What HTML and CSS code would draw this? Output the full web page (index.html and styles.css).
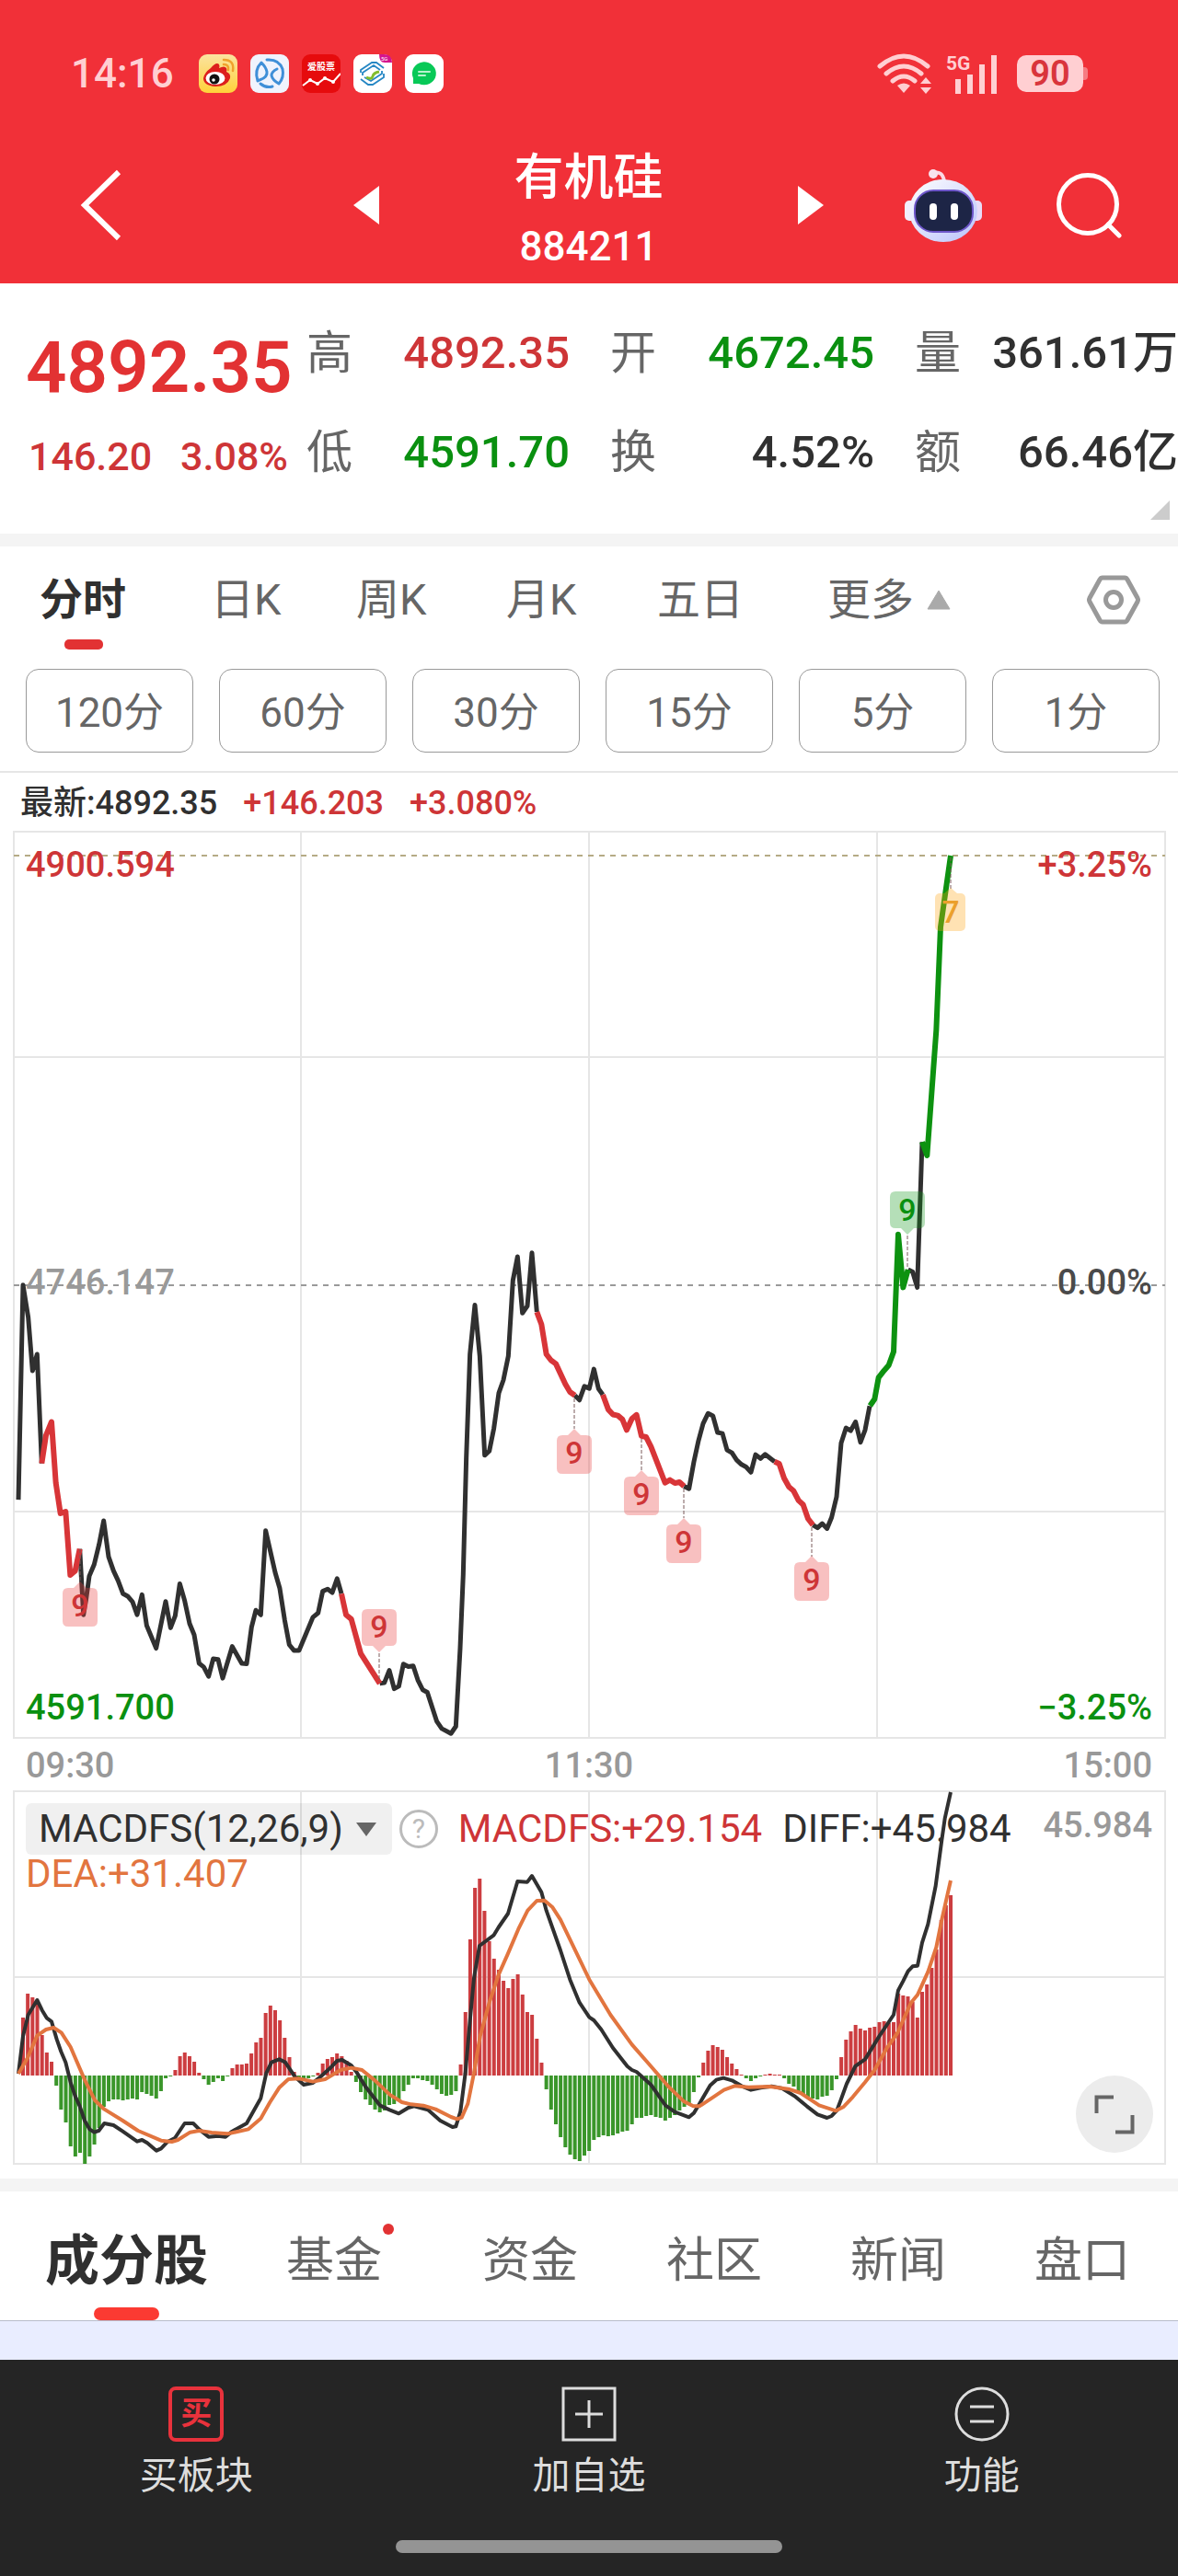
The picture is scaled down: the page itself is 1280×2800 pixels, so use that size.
FILE: index.html
```html
<!DOCTYPE html>
<html lang="zh-CN">
<head>
<meta charset="utf-8">
<meta name="viewport" content="width=device-width, initial-scale=1">
<title>有机硅 884211</title>
<link rel="stylesheet" href="styles.css">
</head>
<body>
<header class="header">
  <div class="status">
    <span class="clock">14:16</span>
    <div class="apps">
      <svg class="app" viewBox="0 0 42 42" aria-hidden="true"><defs><linearGradient id="wb" x1="0" y1="0" x2="0" y2="1"><stop offset="0" stop-color="#fbe3a0"/><stop offset="1" stop-color="#ffd23a"/></linearGradient></defs><rect width="42" height="42" rx="9" fill="url(#wb)"/><path d="M13 15q6-7 9-4q1 2 0 4q6-3 8 0q1 2 0 4q5 2 4 7q-3 9-16 9q-13-1-13-9q1-6 8-11z" fill="#dd1f1c"/><ellipse cx="18" cy="26" rx="10.500" ry="7" fill="#fff"/><circle cx="17" cy="27" r="5.500" fill="#111"/><circle cx="16" cy="28" r="1.800" fill="#fff"/><path d="M27 6q12 0 10 12M27 11q6 0 5 6" fill="none" stroke="#f0a12c" stroke-width="2.500" stroke-linecap="round"/></svg>
      <svg class="app" viewBox="0 0 42 42" aria-hidden="true"><rect width="42" height="42" rx="9" fill="#f0f3fd"/><g fill="none" stroke="#3f8fd8" stroke-width="3" stroke-linecap="round" stroke-linejoin="round"><path d="M12 9q-8 8-4 20l2-1q9-3 8-9q-1-5-6-10zM18 6q13-1 17 10q2 9-4 16q-7-4-8-9q0-4 6-7M11 32q6 5 13 3"/></g></svg>
      <svg class="app" viewBox="0 0 42 42" aria-hidden="true"><rect width="42" height="42" rx="9" fill="#e60b0d"/><text x="21" y="17" text-anchor="middle" font-size="10" font-weight="700" fill="#fff">爱股票</text><path d="M1 34l8-6 8 4 8-6 9 4 8-9" fill="none" stroke="#fff" stroke-width="2"/><g fill="#fff"><circle cx="9" cy="28" r="2"/><circle cx="17" cy="32" r="2"/><circle cx="25" cy="26" r="2"/><circle cx="34" cy="30" r="2"/></g></svg>
      <svg class="app" viewBox="0 0 42 42" aria-hidden="true"><rect width="42" height="42" rx="9" fill="#fff"/><g fill="none" stroke="#2687c4" stroke-width="1.800"><path d="M8 20v-3l12-8h5l8 6M10 23v-3l12-8 7 5M33 21v4l-12 8h-5l-8-6M31 18v3l-12 8-7-4"/></g><path d="M14 25q6 3 7-1t7-5" fill="none" stroke="#82bd2d" stroke-width="3"/><path d="M28 0h5q9 0 9 9H34q-6 0-6-9z" fill="#d5148d"/><text x="30" y="7" font-size="6" fill="#fff">5G</text></svg>
      <svg class="app" viewBox="0 0 42 42" aria-hidden="true"><rect width="42" height="42" rx="9" fill="#fff"/><path d="M9 32v-6a13 12.500 0 1 1 6 6z" fill="#08c957"/><path d="M15 19h12M15 23h7" stroke="#b8f2ce" stroke-width="2" stroke-linecap="round"/></svg>
    </div>
    <svg class="wifi" viewBox="0 0 60 44" aria-hidden="true"><g fill="none" stroke="#ffcfd2" stroke-width="5" stroke-linecap="round"><path d="M3 14Q29-8 55 14M10 22Q29 6 48 22M17 30Q29 20 41 30"/></g><path d="M22 35q7-5 14 0l-7 8z" fill="#ffcfd2"/><path d="M47 33l6-7 6 7zM47 37h12l-6 7z" fill="#ffcfd2"/></svg>
    <svg class="signal" viewBox="0 0 58 44" aria-hidden="true"><text x="1" y="18" font-size="21" font-weight="700" fill="#ffcfd2">5G</text><path d="M14 28v16M27 23v21M40 12v32M53 2v42" stroke="#ffcfd2" stroke-width="6"/></svg>
    <span class="battery">90</span>
  </div>
  <nav class="titlebar">
    <button class="icon-btn back" aria-label="返回"><svg width="46" height="80" viewBox="0 0 46 80"><path d="M42 4L5 40l37 36" fill="none" stroke="#fff" stroke-width="6"/></svg></button>
    <button class="icon-btn" aria-label="上一个"><svg width="28" height="42" viewBox="0 0 28 42"><path d="M28 0v42L0 21z" fill="#fff"/></svg></button>
    <h1 class="title">有机硅<small>884211</small></h1>
    <button class="icon-btn" aria-label="下一个"><svg width="28" height="42" viewBox="0 0 28 42"><path d="M0 0v42l28-21z" fill="#fff"/></svg></button>
    <button class="icon-btn robot" aria-label="智能助手"><svg width="84" height="80" viewBox="0 0 84 80"><defs><linearGradient id="rb" x1="0" y1="0" x2="1" y2="1"><stop offset="0" stop-color="#fff"/><stop offset="1" stop-color="#b9c2fb"/></linearGradient></defs><path d="M31 5q10-3 12 9" fill="none" stroke="#fbd9e4" stroke-width="4"/><circle cx="31" cy="6" r="5" fill="#f8e3ee"/><rect x="0" y="35" width="12" height="22" rx="5" fill="#f2eefd"/><rect x="72" y="35" width="12" height="22" rx="5" fill="#e8dcf8"/><ellipse cx="42" cy="46" rx="37" ry="34" fill="url(#rb)"/><rect x="11" y="24" width="63" height="45" rx="20" fill="#1d2546" stroke="#6d56c9" stroke-width="2"/><rect x="27" y="38" width="8" height="18" rx="4" fill="#fff"/><rect x="50" y="38" width="8" height="18" rx="4" fill="#fff"/></svg></button>
    <button class="icon-btn" aria-label="搜索"><svg width="72" height="72" viewBox="0 0 72 72"><circle cx="35" cy="35" r="31.500" fill="none" stroke="#fff" stroke-width="5"/><path d="M57 57l12 12" stroke="#fff" stroke-width="5" stroke-linecap="round"/></svg></button>
  </nav>
</header>

<main>
  <section class="quote">
    <div class="price">
      <strong class="last">4892.35</strong>
      <div class="change"><span>146.20</span><span>3.08%</span></div>
    </div>
    <dl class="stats">
      <div><dt>高</dt><dd class="up">4892.35</dd></div>
      <div><dt>开</dt><dd class="down">4672.45</dd></div>
      <div><dt>量</dt><dd>361.61万</dd></div>
      <div><dt>低</dt><dd class="down">4591.70</dd></div>
      <div><dt>换</dt><dd>4.52%</dd></div>
      <div><dt>额</dt><dd>66.46亿</dd></div>
    </dl>
    <svg class="corner" viewBox="0 0 21 21" aria-hidden="true"><path d="M21 0v21H0z" fill="#ccc"/></svg>
  </section>

  <section class="periods">
    <nav class="period-tabs">
      <button class="tab active">分时</button>
      <button class="tab">日K</button>
      <button class="tab">周K</button>
      <button class="tab">月K</button>
      <button class="tab">五日</button>
      <button class="tab more">更多<svg width="26" height="22" viewBox="0 0 26 22" aria-hidden="true"><path d="M13 1l12 20H1z" fill="#aaa" stroke="#aaa" stroke-linejoin="round"/></svg></button>
      <button class="tab settings" aria-label="设置"><svg width="58" height="54" viewBox="0 0 58 54"><path d="M17 3h24q2 0 3 2l11 20q1 2 0 4L44 49q-1 2-3 2H17q-2 0-3-2L3 29q-1-2 0-4L14 5q1-2 3-2z" fill="none" stroke="#999" stroke-width="5"/><circle cx="29" cy="27" r="8.500" fill="none" stroke="#999" stroke-width="5"/></svg></button>
    </nav>
    <div class="chips">
      <button>120分</button><button>60分</button><button>30分</button><button>15分</button><button>5分</button><button>1分</button>
    </div>
  </section>

  <section class="charts">
    <p class="latest"><span>最新:4892.35</span><span class="up">+146.203</span><span class="up">+3.080%</span></p>

    <svg class="chart" viewBox="0 893 1280 1002" role="img" aria-label="分时走势">
      <defs>
        <path id="flag-up" d="M-13 7h6L0 0l7 7h6q6 0 6 6v30q0 6-6 6h-26q-6 0-6-6v-30q0-6 6-6z"/>
        <path id="flag-down" d="M-13-47h26q6 0 6 6v28q0 6-6 6H7L0 0l-7-7h-6q-6 0-6-6v-28q0-6 6-6z"/>
      </defs>
      <g class="grid"><rect x="15" y="904" width="1251" height="985"/><path d="M327 904v985M640 904v985M953 904v985M15 1149h1251M15 1643h1251"/></g>
      <path d="M15 930H1266" class="dash" stroke="#b5ab85"/>
      <path d="M15 1397H1266" class="dash" stroke="#999"/>
      <g class="axis">
        <text x="28" y="953" class="t-up">4900.594</text>
        <text x="28" y="1407" class="t-mute">4746.147</text>
        <text x="28" y="1869" class="t-down">4591.700</text>
        <text x="1252" y="953" class="t-up" text-anchor="end">+3.25%</text>
        <text x="1252" y="1407" class="t-dark" text-anchor="end">0.00%</text>
        <text x="1252" y="1869" class="t-down" text-anchor="end">−3.25%</text>
      </g>
      <g transform="translate(0 1340) scale(.33333 .3827)" class="price-line">
        <path d="M60 758L75 148 92 240 106 392 121 345 136 655M260 898L272 1085 280 1045 291 975 307 942 323 885 338 818 354 920 370 960 385 988 401 1025 416 1032 432 1048 447 1085 463 1028 478 1115 509 1180 540 1047 556 1122 571 1088 586 997 602 1045 618 1110 633 1142 649 1223 664 1233 680 1260 695 1210 711 1212 726 1265 757 1175 788 1223 804 1224 820 1120 834 1072 850 1085 866 846 897 965 912 1010 928 1100 943 1170 958 1186 975 1186 1020 1092 1037 1080 1052 1018 1068 1012 1083 1022 1099 982 1113 1025M1238 1280L1253 1278 1269 1243 1285 1295 1300 1288 1315 1225 1331 1232 1347 1230 1362 1270 1378 1298 1393 1305 1424 1388 1440 1408 1470 1422 1486 1402 1500 1180 1510 970 1520 640 1532 345 1548 205 1564 350 1580 632 1595 620 1610 555 1626 455 1641 418 1657 350 1672 135 1687 68 1703 228 1719 208 1734 57 1750 225M1874 462L1889 475 1905 436 1921 442 1936 387 1951 443 1965 460M2230 720L2246 727 2262 650 2277 590 2292 542 2308 513 2324 520 2339 567 2355 570 2370 617 2386 625 2401 645 2417 658 2432 665 2448 680 2463 630 2479 641 2494 629 2525 650M2650 830L2665 838 2680 826 2696 840 2711 808 2727 750 2742 597 2758 554 2773 562 2789 537 2805 595 2820 560 2835 492"/>
        <path class="s-up" d="M136 655L150 575 168 537 182 710 197 797 214 792 229 972 245 960 260 898M1113 1025L1128 1085 1145 1097 1176 1195 1238 1280M1750 225L1765 260 1781 345 1796 362 1812 372 1843 430 1858 452 1874 462M1965 460L1983 502 1998 516 2014 519 2029 530 2043 560 2060 528 2075 517 2091 577 2106 580 2122 607 2168 710 2184 702 2200 711 2215 708 2230 720M2525 650L2540 656 2556 697 2572 722 2587 733 2603 760 2618 772 2634 812 2650 830"/>
      </g>
      <g transform="translate(880 880) scale(.33333 .5102)" class="price-line">
        <path d="M320 980L335 985 350 1018 366 708"/>
        <path class="s-down" d="M196 1270L211 1256 224 1210 242 1195 257 1184 273 1155 288 905 304 1018 320 980M366 708L382 737 412 470 426 250 459 98"/>
      </g>
      <path class="leader" d="M87 1684v34M624 1520v33M697 1564v34M743 1618v32M882 1660v32M412 1797v31M986 1343v36M1033 932v34"/>
      <g class="flags f-up">
        <use href="#flag-up" x="87" y="1719"/><use href="#flag-up" x="624" y="1553"/><use href="#flag-up" x="697" y="1598"/><use href="#flag-up" x="743" y="1650"/><use href="#flag-up" x="882" y="1691"/><use href="#flag-down" x="412" y="1796"/>
        <text x="87" y="1757">9</text><text x="624" y="1591">9</text><text x="697" y="1636">9</text><text x="743" y="1688">9</text><text x="882" y="1729">9</text><text x="412" y="1780">9</text>
      </g>
      <g class="flags f-down"><use href="#flag-down" x="986" y="1342"/><text x="986" y="1327">9</text></g>
      <g class="flags f-warn"><rect x="1016" y="971" width="33" height="41" rx="5"/><path d="M1026 971l7-6 7 6z"/><text x="1033" y="1003">7</text></g>
    </svg>

    <div class="times"><span>09:30</span><span>11:30</span><span>15:00</span></div>

    <div class="macd">
      <div class="legend">
        <div class="legend-row">
          <button class="picker">MACDFS(12,26,9)<svg width="22" height="15" viewBox="0 0 22 15" aria-hidden="true"><path d="M0 0h22L11 15z" fill="#666"/></svg></button>
          <button class="help" aria-label="帮助">?</button>
          <span class="up">MACDFS:+29.154</span>
          <span>DIFF:+45.984</span>
        </div>
        <span class="dea">DEA:+31.407</span>
      </div>
      <svg class="chart" viewBox="0 1940 1280 420" role="img" aria-label="MACDFS">
        <g class="grid"><rect x="15" y="1947" width="1251" height="405"/><path d="M327 1947v405M640 1947v405M953 1947v405M15 2149h1251"/></g>
        <g id="bars"></g>
        <g transform="translate(0 1920) scale(.33333)" class="macd-line">
          <path d="M60 1002L75 880 92 810 121 762 137 795 152 820 168 832 185 890 199 930 214 965 230 1030 245 1075 260 1108 276 1155 292 1183 307 1193 322 1188 340 1164 370 1170 400 1190 447 1223 463 1218 480 1228 510 1253 525 1246 545 1225 570 1212 602 1164 630 1164 649 1183 680 1208 711 1205 735 1208 757 1190 804 1164 850 1082 868 1000 885 965 910 955 930 965 960 1010 990 1038 1020 1032 1045 1012 1075 985 1099 960 1115 957 1145 975 1161 995 1192 1045 1238 1105 1270 1120 1300 1132 1331 1113 1350 1108 1395 1120 1435 1155 1475 1176 1486 1174 1501 1125 1517 1000 1532 830 1545 690 1563 585 1610 550 1625 525 1656 480 1687 375 1719 377 1734 357 1765 410 1781 470 1827 600 1858 695 1889 770 1921 818 1936 828 1960 858 1998 918 2045 978 2060 990 2075 996 2122 1038 2169 1105 2200 1127 2246 1144 2262 1130 2280 1100 2315 1040 2335 1022 2358 1016 2386 1024 2417 1042 2448 1055 2480 1048 2515 1043 2550 1050 2590 1075 2630 1108 2665 1135 2696 1146 2711 1140 2728 1122 2740 1090 2760 1035 2788 978 2820 955 2866 880 2913 810 2928 730 2944 700 2960 668 2975 652 2991 650 3006 575 3025 515 3050 390 3070 240 3080 170 3099 84"/>
          <path class="s-dea" d="M60 1002L90 950 121 878 150 858 175 852 200 868 230 915 276 1022 310 1090 340 1118 400 1155 450 1188 525 1220 560 1224 580 1218 620 1193 649 1188 690 1194 742 1198 810 1183 850 1148 880 1095 910 1048 940 1020 975 1018 1020 1028 1060 1020 1110 990 1145 983 1180 990 1223 1025 1270 1070 1310 1095 1340 1102 1380 1106 1420 1118 1470 1143 1490 1150 1505 1145 1525 1100 1545 1000 1565 880 1595 770 1625 680 1656 610 1690 530 1720 470 1750 438 1775 437 1800 458 1827 500 1921 695 1990 810 2060 907 2122 978 2180 1045 2230 1093 2260 1108 2280 1108 2320 1082 2360 1055 2395 1042 2440 1046 2510 1044 2570 1052 2610 1065 2670 1105 2725 1123 2750 1110 2780 1078 2820 1030 2851 990 2890 920 2925 870 2970 770 2991 745 3025 670 3052 590 3070 500 3099 372"/>
        </g>
        <g class="axis"><text x="1252" y="1997" class="t-mute" text-anchor="end">45.984</text></g>
      </svg>
      <button class="expand" aria-label="全屏"><svg width="44" height="44" viewBox="0 0 44 44"><path d="M2.500 21V3.500H21M41.500 23v18.500H23" fill="none" stroke="#666" stroke-width="4"/></svg></button>
    </div>
  </section>

  <nav class="info-tabs">
    <button class="tab active">成分股</button>
    <button class="tab"><span class="badge">基金</span></button>
    <button class="tab">资金</button>
    <button class="tab">社区</button>
    <button class="tab">新闻</button>
    <button class="tab">盘口</button>
  </nav>
  <div class="strip"></div>
</main>

<footer class="footer">
  <nav class="actions">
    <button><span class="buy">买</span>买板块</button>
    <button><svg width="60" height="60" viewBox="0 0 60 60" aria-hidden="true"><path d="M2 2h56v56H2zM15 30h30M30 15v30" fill="none" stroke="#ddd" stroke-width="3"/></svg>加自选</button>
    <button><svg width="60" height="60" viewBox="0 0 60 60" aria-hidden="true"><circle cx="30" cy="30" r="28" fill="none" stroke="#ddd" stroke-width="3"/><path d="M17 22h26M17 38h26" stroke="#ddd" stroke-width="3"/></svg>功能</button>
  </nav>
  <div class="home"></div>
</footer>
<script src="script.js"></script>
</body>
</html>
```
FILE: styles.css
```css
* { box-sizing: border-box; }
body {
  margin: 0;
  background: #fff;
  color: #303030;
  font-family: Roboto, "Noto Sans CJK SC", sans-serif;
}
button {
  margin: 0;
  padding: 0;
  border: 0;
  background: none;
  color: inherit;
  font: inherit;
}
svg { display: block; flex: none; }
.up { color: #ce3537; }
.down { color: #0a9010; }

/* Header */
.header { background: #f13038; color: #fff; height: 308px; }
.status {
  display: flex;
  align-items: center;
  padding: 56px 103px 0 77px;
}
.clock { font-size: 44px; font-weight: 500; line-height: 48px; color: #ffcfd2; width: 139px; }
.apps { display: flex; gap: 14px; flex: 1; }
.app { width: 42px; height: 42px; }
.wifi { width: 60px; height: 44px; margin-right: 14px; }
.signal { width: 58px; height: 44px; margin-right: 20px; }
.battery {
  position: relative;
  width: 72px;
  height: 40px;
  border-radius: 10px;
  background: #ffcfd2;
  color: #d9353c;
  font-size: 38px;
  font-weight: 600;
  line-height: 41px;
  text-align: center;
}
.battery::after {
  content: "";
  position: absolute;
  left: 72px;
  top: 13px;
  width: 5px;
  height: 14px;
  border-radius: 0 4px 4px 0;
  background: #f67c82;
}
.titlebar {
  display: grid;
  grid-template-columns: 297fr 28fr 455fr 116fr 164fr 133fr;
  align-items: center;
  padding: 56px 0 0 87px;
}
.titlebar .icon-btn { justify-self: start; margin-bottom: 22px; }
.title {
  margin: 0;
  text-align: center;
  font-size: 54px;
  font-weight: 500;
  line-height: 68px;
}
.title small { display: block; font-size: 44px; font-weight: 500; line-height: 80px; }

/* Quote */
.quote {
  position: relative;
  display: flex;
  gap: 20px;
  height: 286px;
  padding: 22px 0 0 28px;
  border-bottom: 14px solid #f4f4f4;
}
.price { width: 285px; padding-top: 24px; color: #e23233; }
.last { display: block; font-size: 78px; font-weight: 600; line-height: 92px; }
.change {
  display: flex;
  justify-content: space-between;
  padding-left: 3px;
  font-size: 43px;
  font-weight: 500;
  line-height: 100px;
  color: #ce3537;
}
.stats {
  flex: 1;
  display: grid;
  grid-template-columns: 286fr 287fr 286fr;
  column-gap: 44px;
  align-content: start;
  margin: 0;
  line-height: 108px;
}
.stats div { display: flex; justify-content: space-between; }
.stats dt { font-size: 50px; color: #666; }
.stats dd { margin: 0; font-size: 49px; font-weight: 500; white-space: nowrap; }
.corner { position: absolute; right: 9px; bottom: 15px; width: 21px; height: 21px; }

/* Period tabs */
.tab { position: relative; text-align: left; color: #666; white-space: nowrap; }
.tab.active { color: #303030; font-weight: 700; }
.tab.active::after { content: ""; position: absolute; background: #e23233; }
.periods { border-bottom: 2px solid #e6e6e6; padding-bottom: 20px; }
.period-tabs {
  display: grid;
  grid-template-columns: 186fr 158fr 163fr 164fr 185fr 282fr 58px;
  align-items: center;
  padding: 0 41px 17px 43px;
  font-size: 47px;
  line-height: 116px;
}
.period-tabs .active::after { left: 27px; top: 101px; width: 42px; height: 11px; border-radius: 5px; }
.more { display: flex; align-items: center; gap: 14px; }
.chips { display: grid; grid-template-columns: repeat(6, 1fr); gap: 28px; padding: 0 20px 0 28px; }
.chips button {
  height: 91px;
  padding-bottom: 3px;
  border: 1px solid #999;
  border-radius: 14px;
  color: #666;
  font-size: 44px;
}

/* Charts */
.latest { display: flex; gap: 28px; margin: 0; padding: 8px 22px 0; font-size: 36px; font-weight: 500; line-height: 50px; height: 53px; }
.chart { width: 100%; height: auto; }
.grid { fill: none; stroke: #e6e6e6; stroke-width: 2; }
.dash { stroke-width: 2; stroke-dasharray: 6 6; }
.axis { font-size: 38px; font-weight: 500; }
.t-up { fill: #ce3537; }
.t-down { fill: #0a9010; }
.t-mute { fill: #999; }
.t-dark { fill: #4a4a4a; }
.price-line path, .macd-line path {
  fill: none;
  stroke: #303030;
  stroke-width: 5px;
  stroke-linejoin: round;
  vector-effect: non-scaling-stroke;
}
.macd-line path { stroke-width: 4px; }
.price-line .s-up { stroke: #d83538; stroke-width: 6px; }
.price-line .s-down { stroke: #0d9210; stroke-width: 6px; }
.macd-line .s-dea { stroke: #e2753f; }
.leader { fill: none; stroke: #7a5a5a; stroke-width: 1; stroke-dasharray: 4 2; }
.flags { font-size: 34px; font-weight: 500; text-anchor: middle; }
.f-up { fill: rgba(232, 60, 60, .32); }
.f-up text { fill: #ce3537; }
.f-down { fill: rgba(10, 150, 20, .3); }
.f-down text { fill: #0a9010; }
.f-warn { fill: rgba(255, 165, 20, .32); }
.f-warn text { fill: #eba02c; }
.times {
  display: grid;
  grid-template-columns: 1fr 1fr 1fr;
  padding: 0 28px;
  height: 45px;
  color: #999;
  font-size: 38px;
  font-weight: 500;
  line-height: 49px;
}
.times span:nth-child(2) { text-align: center; }
.times span:nth-child(3) { text-align: right; }
.macd { position: relative; padding-bottom: 8px; }
.legend { position: absolute; left: 28px; top: 20px; font-size: 42px; }
.legend-row { display: flex; align-items: center; gap: 22px; line-height: 56px; white-space: nowrap; }
.picker {
  display: flex;
  align-items: center;
  gap: 14px;
  height: 56px;
  padding: 0 17px 0 14px;
  border-radius: 6px;
  background: rgba(0, 0, 0, .06);
}
.help {
  width: 42px;
  height: 42px;
  margin: 0 0 0 -14px;
  border: 3px solid #bbb;
  border-radius: 50%;
  color: #bbb;
  font-size: 30px;
  line-height: 36px;
}
.dea { display: block; line-height: 42px; color: #e2753f; }
.expand {
  position: absolute;
  right: 27px;
  bottom: 28px;
  display: grid;
  place-items: center;
  width: 84px;
  height: 84px;
  border-radius: 50%;
  background: #ececec;
}

/* Info tabs */
.info-tabs {
  display: grid;
  grid-template-columns: 262fr 213fr 200fr 200fr 200fr 156fr;
  height: 155px;
  padding-left: 49px;
  border-top: 14px solid #f4f4f4;
  border-bottom: 1px solid #b8bccb;
  font-size: 52px;
}
.info-tabs .active { font-size: 59px; }
.info-tabs .active::after { left: 53px; bottom: 0; width: 71px; height: 14px; border-radius: 7px; background: #fb3a32; }
.badge { position: relative; }
.badge::after {
  content: "";
  position: absolute;
  right: -13px;
  top: -10px;
  width: 12px;
  height: 12px;
  border-radius: 50%;
  background: #e23233;
}
.strip { height: 42px; background: #e9edff; }

/* Footer */
.footer { height: 235px; background: #252525; color: #ddd; }
.actions { display: grid; grid-template-columns: repeat(3, 1fr); padding-top: 29px; }
.actions button { display: flex; flex-direction: column; align-items: center; font-size: 41px; line-height: 74px; }
.buy {
  width: 60px;
  height: 60px;
  border: 4px solid #e8323c;
  border-radius: 8px;
  color: #e8323c;
  font-size: 34px;
  font-weight: 700;
  line-height: 50px;
  text-align: center;
}
.home { width: 420px; height: 14px; margin: 33px auto 0; border-radius: 7px; background: #949494; }
```
FILE: script.js
```js
// Histogram heights, one per trading minute: above zero is red, below is green.
const heights = [
  63, 89, 85, 81, 44, 25, 15, -11, -37, -51, -77, -88, -84, -96, -88, -75, -57, -34, -28, -26,
  -26, -27, -26, -25, -26, -18, -20, -22, -25, -17, -3, -1, 6, 21, 25, 21, 15, 3, -4, -10,
  -7, -3, -6, -1, 8, 12, 12, 13, 24, 36, 41, 68, 76, 71, 60, 41, 20, 4, -2, -5,
  -3, -1, 3, 13, 18, 20, 24, 21, 16, 4, -7, -18, -26, -32, -37, -40, -38, -32, -31, -28,
  -17, -10, -3, -3, -5, -6, -10, -15, -20, -22, -21, -17, 12, 69, 148, 204, 214, 179, 146, 127,
  115, 103, 95, 105, 110, 88, 69, 66, 40, 14, -15, -37, -53, -67, -78, -86, -91, -93, -87, -82,
  -70, -67, -65, -66, -65, -63, -61, -60, -53, -46, -46, -44, -43, -45, -46, -49, -46, -43, -38, -34,
  -32, -18, -2, 14, 27, 33, 31, 28, 20, 13, 7, 1, -3, -6, -3, -1, 1, 2, 1, 1,
  -3, -9, -12, -17, -21, -23, -25, -26, -23, -22, -16, -4, 20, 39, 48, 55, 51, 49, 52, 53,
  58, 59, 57, 58, 89, 87, 86, 80, 63, 91, 99, 117, 137, 169, 185, 196
];
const zero = 2256;
const step = 1251 / 242;
const bars = document.getElementById("bars");
heights.forEach((h, i) => {
  const bar = document.createElementNS("http://www.w3.org/2000/svg", "rect");
  bar.setAttribute("x", 23 + i * step);
  bar.setAttribute("y", h > 0 ? zero - h : zero);
  bar.setAttribute("width", 4);
  bar.setAttribute("height", Math.abs(h));
  bar.setAttribute("fill", h > 0 ? "#cc3d40" : "#3a962a");
  bars.append(bar);
});
```
